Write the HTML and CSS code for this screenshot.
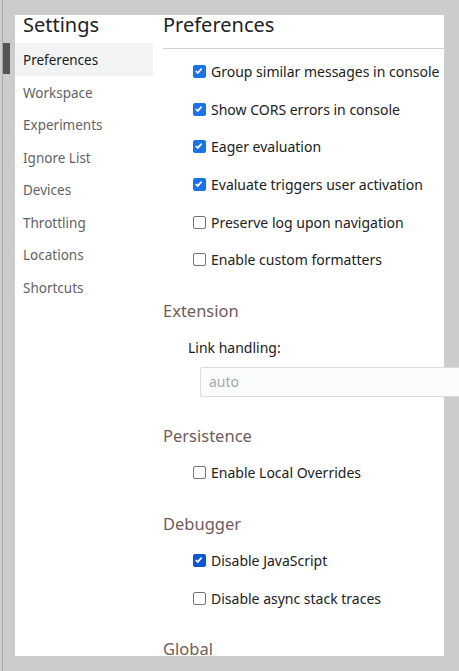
FILE: index.html
```html
<!DOCTYPE html>
<html>
<head>
<meta charset="utf-8">
<link rel="stylesheet" href="styles.css">
</head>
<body>
<div class="frame">
  <div class="rail"><div class="indicator"></div></div>
  <div class="panel">
    <nav class="sidebar">
      <div class="title">Settings</div>
      <div class="item selected">Preferences</div>
      <div class="item">Workspace</div>
      <div class="item">Experiments</div>
      <div class="item">Ignore List</div>
      <div class="item">Devices</div>
      <div class="item">Throttling</div>
      <div class="item">Locations</div>
      <div class="item">Shortcuts</div>
    </nav>
    <main class="main">
      <div class="header">Preferences</div>
      <div class="group first">
        <label class="check"><span class="box on"><svg viewBox="0 0 13 13"><path d="M3 6.9 L5.4 9.2 L10 4.1"/></svg></span>Group similar messages in console</label>
        <label class="check"><span class="box on"><svg viewBox="0 0 13 13"><path d="M3 6.9 L5.4 9.2 L10 4.1"/></svg></span>Show CORS errors in console</label>
        <label class="check"><span class="box on"><svg viewBox="0 0 13 13"><path d="M3 6.9 L5.4 9.2 L10 4.1"/></svg></span>Eager evaluation</label>
        <label class="check"><span class="box on"><svg viewBox="0 0 13 13"><path d="M3 6.9 L5.4 9.2 L10 4.1"/></svg></span>Evaluate triggers user activation</label>
        <label class="check"><span class="box"></span>Preserve log upon navigation</label>
        <label class="check"><span class="box"></span>Enable custom formatters</label>
      </div>
      <div class="section">Extension</div>
      <div class="field-label">Link handling:</div>
      <div class="select">auto</div>
      <div class="section">Persistence</div>
      <div class="group">
        <label class="check"><span class="box"></span>Enable Local Overrides</label>
      </div>
      <div class="section">Debugger</div>
      <div class="group">
        <label class="check"><span class="box on dark"><svg viewBox="0 0 13 13"><path d="M3 6.9 L5.4 9.2 L10 4.1"/></svg></span>Disable JavaScript</label>
        <label class="check"><span class="box"></span>Disable async stack traces</label>
      </div>
      <div class="section">Global</div>
    </main>
  </div>
</div>
</body>
</html>
```

FILE: styles.css
```css
html, body {
  margin: 0;
  padding: 0;
  background: #cccccc;
  font-family: "Noto Sans", "Open Sans", sans-serif;
  color: #202124;
}
.frame {
  display: flex;
  height: 671px;
  overflow: hidden;
}
.rail {
  flex: 0 0 13px;
  margin-left: 2px;
  border-left: 1px solid #a8a8a8;
  padding-top: 43px;
  box-sizing: border-box;
}
.indicator {
  width: 7px;
  height: 31px;
  background: #555555;
}
.panel {
  margin-top: 15px;
  width: 429px;
  height: 641px;
  background: #ffffff;
  display: flex;
  overflow-x: visible;
  overflow-y: clip;
  flex-shrink: 0;
}
.sidebar {
  flex: 0 0 138px;
}
.title {
  font-size: 20px;
  line-height: 18px;
  padding-left: 8px;
  padding-top: 1px;
  height: 27px;
  color: #202124;
}
.item {
  height: 32.5px;
  line-height: 32px;
  padding-top: 1px;
  box-sizing: border-box;
  font-size: 13.5px;
  padding-left: 8px;
  color: #5f6368;
}
.item.selected {
  background: #f1f3f4;
  color: #202124;
}
.main {
  flex: 0 0 306px;
  padding-left: 10px;
  box-sizing: border-box;
}
.header {
  font-size: 20px;
  line-height: 18px;
  padding-top: 1px;
  height: 32px;
  border-bottom: 1px solid #cfcfcf;
}
.group {
  padding-left: 30px;
  padding-top: 6.5px;
}
.group.first {
  padding-top: 4px;
}
.check {
  display: flex;
  align-items: center;
  height: 37.6px;
  font-size: 14px;
  gap: 5px;
}
.box {
  width: 13px;
  height: 13px;
  box-sizing: border-box;
  border: 1px solid #767676;
  border-radius: 2px;
  flex-shrink: 0;
  display: flex;
}
.box svg {
  width: 11px;
  height: 11px;
  margin: 0;
}
.box svg path {
  fill: none;
  stroke: #ffffff;
  stroke-width: 2;
  stroke-linecap: butt;
  stroke-linejoin: miter;
  transform: translate(-1px, -1px);
}
.box.on {
  background: #1a73e8;
  border-color: #1a73e8;
}
.box.dark {
  background: #0b57d0;
  border-color: #0b57d0;
}
.section {
  font-size: 16.5px;
  line-height: 24px;
  color: #705c5a;
  margin-top: 20px;
}
.field-label {
  font-size: 14px;
  line-height: 24px;
  padding-left: 25px;
  margin-top: 13px;
}
.select {
  margin-left: 37px;
  margin-top: 7px;
  height: 30px;
  box-sizing: border-box;
  border: 1px solid #dcdcdc;
  border-radius: 2px;
  background: #fafcfc;
  color: #a8a8a8;
  font-size: 14px;
  line-height: 28px;
  padding-left: 8px;
  margin-right: -20px;
}
.select + .section {
  margin-top: 27px;
}
```
